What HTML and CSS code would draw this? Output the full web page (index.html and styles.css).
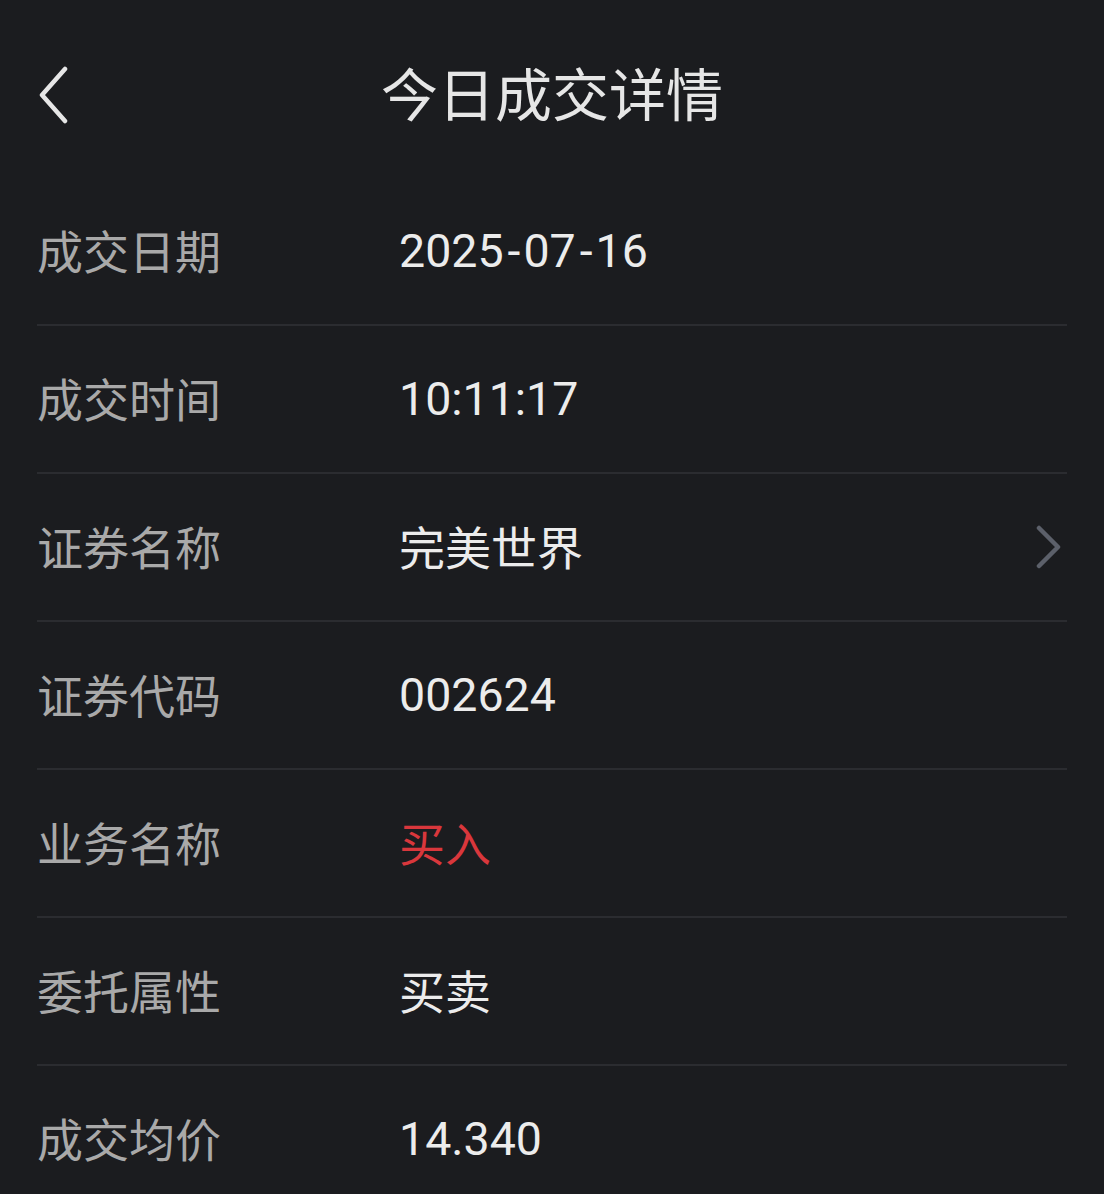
FILE: index.html
```html
<!DOCTYPE html>
<html lang="zh-CN">
<head>
<meta charset="utf-8">
<title>今日成交详情</title>
<link rel="stylesheet" href="styles.css">
</head>
<body>
<div class="page">
  <header class="header">
    <span class="back">
      <svg width="40" height="60" viewBox="0 0 40 60"><path d="M33 5 L10 31 L33 57" fill="none" stroke="#e6e6e6" stroke-width="4.5" stroke-linecap="round" stroke-linejoin="round"/></svg>
    </span>
    <h1 class="title">今日成交详情</h1>
  </header>
  <div class="list">
    <div class="row"><span class="label">成交日期</span><span class="value num">2025<span class="dash">-</span>07<span class="dash">-</span>16</span></div>
    <div class="row"><span class="label">成交时间</span><span class="value num">10:11:17</span></div>
    <div class="row"><span class="label">证券名称</span><span class="value">完美世界</span>
      <span class="arrow"><svg width="30" height="44" viewBox="0 0 30 44"><path d="M5 3 L24 22 L5 41" fill="none" stroke="#5c606a" stroke-width="4.5" stroke-linecap="round" stroke-linejoin="round"/></svg></span>
    </div>
    <div class="row"><span class="label">证券代码</span><span class="value num">002624</span></div>
    <div class="row"><span class="label">业务名称</span><span class="value red">买入</span></div>
    <div class="row"><span class="label">委托属性</span><span class="value">买卖</span></div>
    <div class="row"><span class="label">成交均价</span><span class="value num">14.340</span></div>
  </div>
</div>
</body>
</html>
```

FILE: styles.css
```css
html, body {
  margin: 0;
  padding: 0;
  background: #1b1c1f;
}
body {
  font-family: "Noto Sans CJK SC", "Noto Sans", sans-serif;
  color: #ececec;
  overflow: hidden;
}
.page {
  width: 1104px;
  height: 1194px;
  overflow: hidden;
}
.header {
  height: 178px;
  position: relative;
  display: flex;
  align-items: flex-start;
  justify-content: center;
}
.back {
  position: absolute;
  left: 32px;
  top: 64px;
  display: flex;
}
.title {
  margin: 0;
  margin-top: 52px;
  font-size: 57px;
  font-weight: 400;
  line-height: 78px;
  color: #e6e6e6;
  letter-spacing: 0;
}
.list {
  padding: 0 37px;
}
.row {
  height: 146px;
  border-bottom: 2px solid #2b2c30;
  display: flex;
  align-items: center;
}
.label {
  width: 362px;
  flex: none;
  font-size: 46px;
  color: #a9a9a9;
  line-height: 1;
  margin-bottom: 4px;
}
.value {
  flex: 1;
  font-size: 46px;
  color: #ececec;
  line-height: 1;
  margin-bottom: 4px;
}
.value.num {
  font-family: Roboto, "Noto Sans", sans-serif;
  font-size: 46.5px;
  margin-bottom: 0;
}
.dash {
  padding: 0 3px 0 4px;
}
.value.red {
  color: #d9373c;
}
.arrow {
  display: flex;
  margin-right: 3px;
}
```
